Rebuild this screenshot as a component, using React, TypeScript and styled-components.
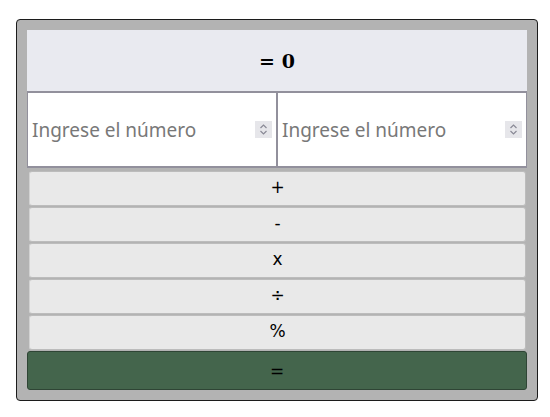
import React from "react";
import styled, { createGlobalStyle } from "styled-components";

const Global = createGlobalStyle`
  html, body { margin: 0; padding: 0; background: #ffffff; }
  * { box-sizing: border-box; }
`;

const Page = styled.div`
  padding: 19px 0 0 16px;
`;

const Calculator = styled.div`
  width: 522px;
  padding: 10px;
  border: 1px solid #1c1c1c;
  border-radius: 4px;
  background: #b3b3b3;
  display: flex;
  flex-direction: column;
`;

const Display = styled.div`
  height: 61px;
  background: #e9eaf0;
  display: flex;
  align-items: center;
  justify-content: center;
  font-family: "DejaVu Serif", serif;
  font-weight: bold;
  font-size: 19px;
  color: #000;
`;

const InputsRow = styled.div`
  display: grid;
  grid-template-columns: minmax(0, 1fr) minmax(0, 1fr);
`;

const InputCell = styled.label`
  height: 77px;
  min-width: 0;
  background: #ffffff;
  border-style: solid;
  border-color: #92909c;
  border-width: 2px 1px 2px 1px;
  display: flex;
  align-items: center;
  padding: 0 4px 0 4px;
  gap: 4px;
`;

const NumberInput = styled.input`
  flex: 1;
  width: 0;
  min-width: 0;
  border: none;
  outline: none;
  background: transparent;
  padding: 0;
  font-family: "Noto Sans", "Open Sans", sans-serif;
  font-size: 19px;
  color: #222;
  &::placeholder {
    color: #787878;
  }
`;

const Spinner = styled.span`
  width: 17px;
  height: 17px;
  background: #e6e6ea;
  display: flex;
  align-items: center;
  justify-content: center;
  flex-shrink: 0;
`;

const Buttons = styled.div`
  display: flex;
  flex-direction: column;
  padding-top: 3px;
`;

const OpButton = styled.button`
  height: 35px;
  margin: 0 1px 1px 2px;
  background: #e9e9e9;
  border: 1px solid #bcbcbc;
  border-left-color: #d2d2d2;
  border-radius: 3px;
  font-family: "DejaVu Sans", sans-serif;
  font-size: 17px;
  line-height: 1;
  color: #000;
  padding: 0 0 3px 0;
  cursor: pointer;
`;

const EqualsButton = styled.button`
  height: 39px;
  background: #44654c;
  border: 1px solid #2f4535;
  border-radius: 3px;
  font-family: "DejaVu Sans", sans-serif;
  font-size: 17px;
  color: #000;
  padding: 0;
  cursor: pointer;
`;

const SpinIcon = () => (
  <svg width="11" height="13" viewBox="0 0 11 13" fill="none">
    <path d="M2.5 5 L5.5 2 L8.5 5" stroke="#8a8a96" strokeWidth="1.2" />
    <path d="M2.5 8 L5.5 11 L8.5 8" stroke="#8a8a96" strokeWidth="1.2" />
  </svg>
);

const ops = ["+", "-", "x", "÷", "%"];

export default function App() {
  return (
    <>
      <Global />
      <Page>
        <Calculator>
          <Display>= 0</Display>
          <InputsRow>
            <InputCell>
              <NumberInput type="text" inputMode="numeric" placeholder="Ingrese el número" />
              <Spinner>
                <SpinIcon />
              </Spinner>
            </InputCell>
            <InputCell>
              <NumberInput type="text" inputMode="numeric" placeholder="Ingrese el número" />
              <Spinner>
                <SpinIcon />
              </Spinner>
            </InputCell>
          </InputsRow>
          <Buttons>
            {ops.map((op) => (
              <OpButton key={op}>{op}</OpButton>
            ))}
          </Buttons>
          <EqualsButton>=</EqualsButton>
        </Calculator>
      </Page>
    </>
  );
}
